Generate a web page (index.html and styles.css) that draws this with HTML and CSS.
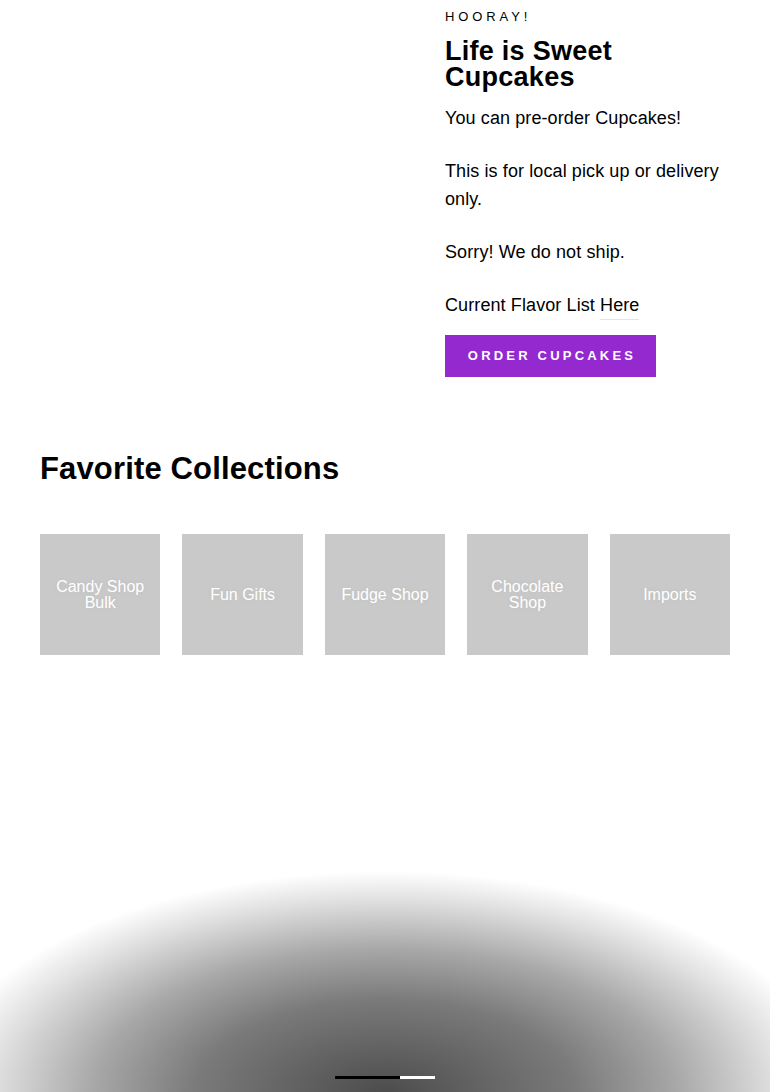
FILE: index.html
```html
<!DOCTYPE html>
<html lang="en">
<head>
<meta charset="utf-8">
<title>Life is Sweet Cupcakes</title>
<link rel="stylesheet" href="styles.css">
</head>
<body>
<section class="feature">
  <div class="feature-media"></div>
  <div class="feature-text">
    <p class="eyebrow">Hooray!</p>
    <h2 class="feature-title">Life is Sweet Cupcakes</h2>
    <div class="rte">
      <p>You can pre-order Cupcakes!</p>
      <p>This is for local pick up or delivery only.</p>
      <p>Sorry! We do not ship.</p>
      <p>Current Flavor List <a href="#" class="link">Here</a></p>
    </div>
    <a href="#" class="btn">Order Cupcakes</a>
  </div>
</section>

<section class="collections">
  <h2 class="section-title">Favorite Collections</h2>
  <div class="tiles">
    <a href="#" class="tile"><span>Candy Shop Bulk</span></a>
    <a href="#" class="tile"><span>Fun Gifts</span></a>
    <a href="#" class="tile"><span>Fudge Shop</span></a>
    <a href="#" class="tile"><span>Chocolate Shop</span></a>
    <a href="#" class="tile"><span>Imports</span></a>
  </div>
</section>

<section class="slideshow">
  <div class="slide-shade"></div>
  <div class="progress">
    <span class="progress-done"></span>
    <span class="progress-rest"></span>
  </div>
</section>
</body>
</html>
```

FILE: styles.css
```css
* { box-sizing: border-box; }

html, body {
  margin: 0;
  padding: 0;
  background: #fff;
  color: #000;
  font-family: "Liberation Sans", Arial, sans-serif;
}

.feature {
  display: grid;
  grid-template-columns: 1fr 285px;
  column-gap: 45px;
  padding: 0 40px;
}

.feature-text {
  padding-top: 9px;
}

.eyebrow {
  margin: 0;
  font-size: 13px;
  line-height: 16px;
  letter-spacing: 0.3em;
  text-transform: uppercase;
}

.feature-title {
  margin: 13px 0 0;
  font-size: 27px;
  line-height: 26px;
  font-weight: 700;
  letter-spacing: 0.01em;
}

.rte {
  margin-top: 14px;
  font-size: 18px;
  line-height: 28px;
  letter-spacing: 0.1px;
}

.rte p {
  margin: 0 0 25px;
}

.rte p:last-child {
  margin-bottom: 0;
}

.link {
  color: #000;
  text-decoration: none;
  border-bottom: 1px solid #e4e4e4;
  padding-bottom: 4px;
}

.btn {
  display: inline-block;
  margin-top: 16px;
  width: 211px;
  height: 42px;
  line-height: 42px;
  text-align: center;
  background: #9429d0;
  color: #fff;
  font-size: 13px;
  font-weight: 700;
  letter-spacing: 3.2px;
  text-transform: uppercase;
  text-decoration: none;
  padding-left: 3px;
}

.collections {
  padding: 0 40px;
  margin-top: 72px;
}

.section-title {
  margin: 0;
  font-size: 31px;
  line-height: 40px;
  font-weight: 700;
  letter-spacing: 0.15px;
}

.tiles {
  margin-top: 45px;
  display: grid;
  grid-template-columns: repeat(5, 1fr);
  column-gap: 22px;
}

.tile {
  height: 121px;
  background: #c9c9c9;
  display: flex;
  align-items: center;
  justify-content: center;
  text-align: center;
  padding: 10px;
  color: #fff;
  text-decoration: none;
  font-size: 16px;
  line-height: 16px;
  text-shadow: 0 0 6px rgba(0, 0, 0, 0.06);
}

.slideshow {
  position: relative;
  margin-top: 196px;
  height: 242px;
  overflow: hidden;
}

.slide-shade {
  position: absolute;
  inset: 0;
  background: radial-gradient(ellipse 450px 222px at 50% 100%,
    rgba(0, 0, 0, 0.7) 0%,
    rgba(0, 0, 0, 0.52) 42%,
    rgba(0, 0, 0, 0.34) 65%,
    rgba(0, 0, 0, 0.12) 87%,
    rgba(0, 0, 0, 0) 100%);
}

.progress {
  position: absolute;
  left: 335px;
  top: 225px;
  width: 100px;
  height: 3px;
  display: flex;
}

.progress-done {
  width: 65px;
  background: #000;
}

.progress-rest {
  flex: 1;
  background: #fff;
}
```
